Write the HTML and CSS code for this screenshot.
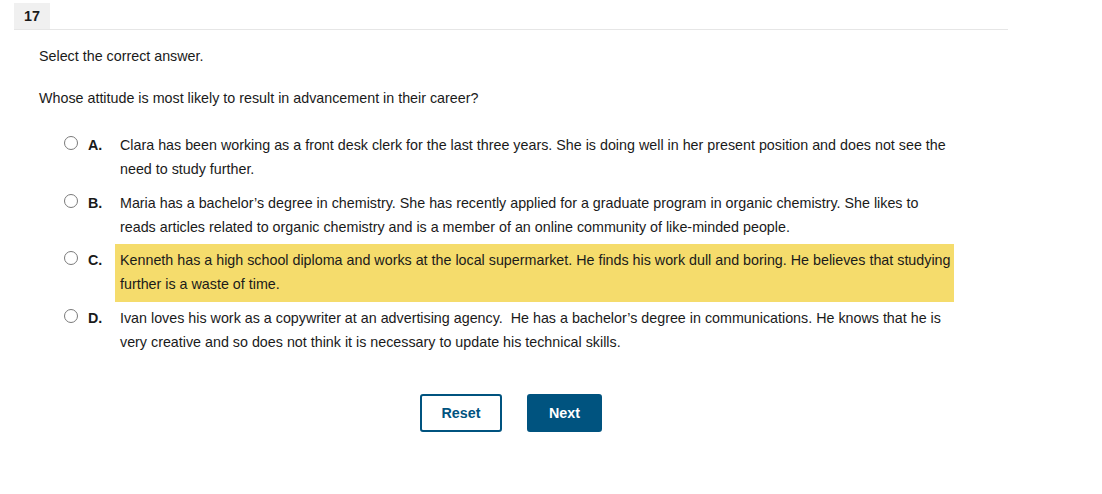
FILE: index.html
```html
<!DOCTYPE html>
<html>
<head>
<meta charset="utf-8">
<link rel="stylesheet" href="styles.css">
</head>
<body>
<div class="page">
  <div class="header"><span class="qnum">17</span></div>
  <div class="content">
    <p class="prompt">Select the correct answer.</p>
    <p class="question">Whose attitude is most likely to result in advancement in their career?</p>
    <ul class="options">
      <li class="option">
        <span class="radio"></span>
        <span class="letter">A.</span>
        <span class="text">Clara has been working as a front desk clerk for the last three years. She is doing well in her present position and does not see the need to study further.</span>
      </li>
      <li class="option">
        <span class="radio"></span>
        <span class="letter">B.</span>
        <span class="text">Maria has a bachelor’s degree in chemistry. She has recently applied for a graduate program in organic chemistry. She likes to reads articles related to organic chemistry and is a member of an online community of like-minded people.</span>
      </li>
      <li class="option">
        <span class="radio"></span>
        <span class="letter">C.</span>
        <span class="text highlight">Kenneth has a high school diploma and works at the local supermarket. He finds his work dull and boring. He believes that studying further is a waste of time.</span>
      </li>
      <li class="option">
        <span class="radio"></span>
        <span class="letter">D.</span>
        <span class="text">Ivan loves his work as a copywriter at an advertising agency.&nbsp; He has a bachelor’s degree in communications. He knows that he is very creative and so does not think it is necessary to update his technical skills.</span>
      </li>
    </ul>
    <div class="actions">
      <button class="btn btn-reset">Reset</button>
      <button class="btn btn-next">Next</button>
    </div>
  </div>
</div>
</body>
</html>
```
FILE: styles.css
```css
html, body {
  margin: 0;
  padding: 0;
  background: #ffffff;
}
body {
  font-family: "Liberation Sans", Arial, sans-serif;
  font-size: 14.3px;
  color: #1a1a1a;
}
.page {
  width: 994px;
  margin-left: 14px;
  padding-top: 3px;
}
.header {
  border-bottom: 1px solid #e6e6e6;
  height: 26px;
}
.qnum {
  display: inline-block;
  width: 36px;
  height: 26px;
  line-height: 26px;
  background: #f0f0f0;
  text-align: center;
  font-weight: bold;
  font-size: 14.3px;
  color: #1a1a1a;
}
.content {
  padding-left: 25px;
}
.prompt {
  margin: 16px 0 0 0;
  line-height: 20px;
}
.question {
  margin: 22px 0 0 0;
  line-height: 20px;
}
.options {
  list-style: none;
  margin: 21px 0 0 0;
  padding: 0 0 0 25px;
  display: flex;
  flex-direction: column;
}
.option {
  display: flex;
  align-items: flex-start;
}
.radio {
  flex: none;
  width: 12px;
  height: 12px;
  border: 1px solid #7a7a7a;
  border-radius: 50%;
  margin-top: 7px;
  background: #fff;
}
.letter {
  flex: none;
  width: 27px;
  margin-left: 10px;
  padding-top: 4px;
  line-height: 24px;
  font-weight: bold;
}
.text {
  width: 833px;
  padding: 4px 1px 5.5px 5px;
  line-height: 24px;
}
.highlight {
  background: #f5dc6c;
}
.actions {
  display: flex;
  justify-content: center;
  gap: 25px;
  margin-top: 35px;
  margin-left: -25px;
}
.btn {
  font-family: "Liberation Sans", Arial, sans-serif;
  font-size: 14.3px;
  font-weight: bold;
  height: 38px;
  border-radius: 3px;
  border: 2px solid #00537f;
  cursor: pointer;
}
.btn-reset {
  width: 82px;
  background: #fff;
  color: #00537f;
}
.btn-next {
  width: 75px;
  background: #00537f;
  color: #fff;
}
```
